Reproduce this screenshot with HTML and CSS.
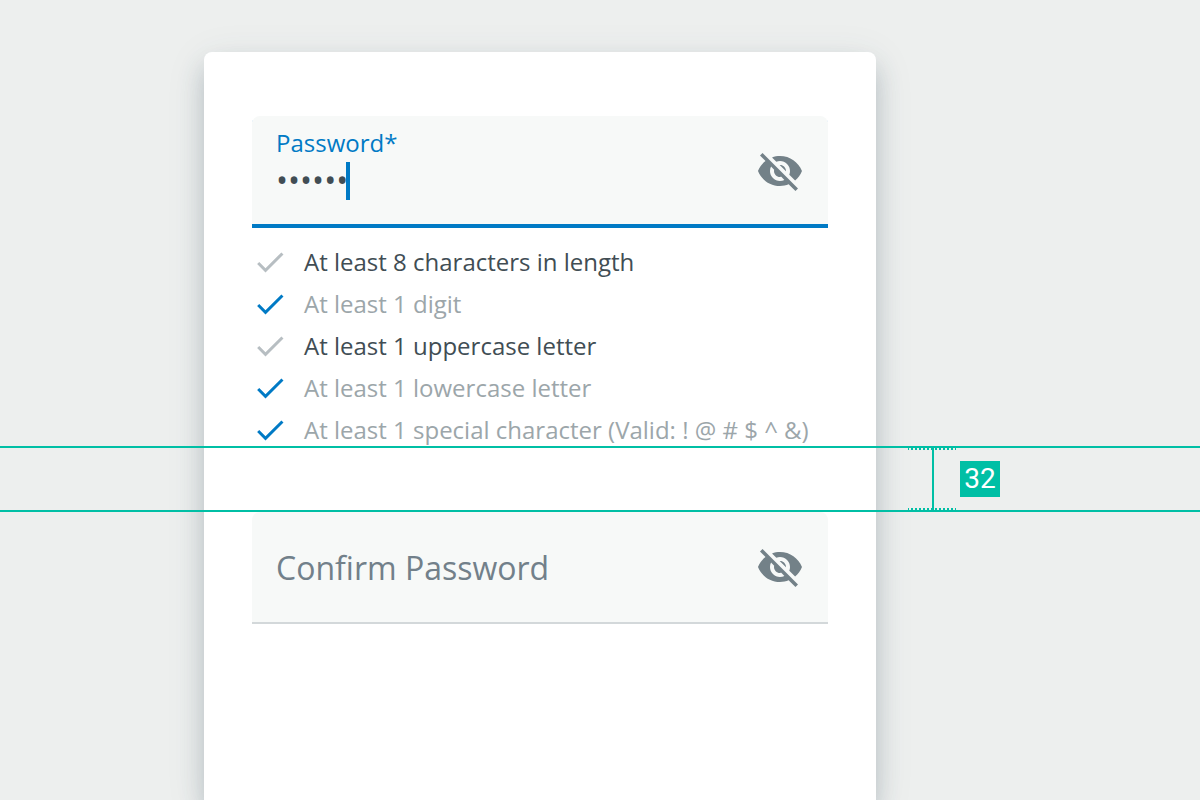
FILE: index.html
```html
<!DOCTYPE html>
<html lang="en">
<head>
<meta charset="utf-8">
<meta name="viewport" content="width=device-width, initial-scale=1">
<title>Password requirements</title>
<link rel="stylesheet" href="styles.css">
</head>
<body>
<svg class="symbols" aria-hidden="true">
  <symbol id="eye-off" viewBox="0 0 24 24"><path d="M12 7c2.76 0 5 2.24 5 5 0 .65-.13 1.26-.36 1.83l2.92 2.92c1.51-1.26 2.7-2.89 3.43-4.75-1.73-4.39-6-7.5-11-7.5-1.4 0-2.74.25-3.98.7l2.16 2.16C10.74 7.13 11.35 7 12 7zM2 4.27l2.28 2.28.46.46C3.08 8.3 1.78 10.02 1 12c1.73 4.39 6 7.5 11 7.5 1.55 0 3.03-.3 4.38-.84l.42.42L19.73 22 21 20.73 3.27 3 2 4.27zM7.53 9.8l1.55 1.55c-.05.21-.08.43-.08.65 0 1.66 1.34 3 3 3 .22 0 .44-.03.65-.08l1.55 1.55c-.67.33-1.41.53-2.2.53-2.76 0-5-2.24-5-5 0-.79.2-1.53.53-2.2zm4.31-.78l3.15 3.15.02-.16c0-1.66-1.34-3-3-3l-.17.01z"/></symbol>
  <symbol id="check" viewBox="0 0 24 24"><path d="M9 16.17L4.83 12l-1.42 1.41L9 19 21 7l-1.41-1.41z"/></symbol>
</svg>
<main class="page">
  <form class="card">
    <div class="field field-active">
      <div class="field-body">
        <label class="field-label" for="password">Password*</label>
        <div class="field-entry">
          <input class="field-input" id="password" type="password" value="secret" autocomplete="off">
          <span class="caret"></span>
        </div>
      </div>
      <button class="toggle" type="button" aria-label="Show password"><svg class="eye"><use href="#eye-off"/></svg></button>
    </div>
    <ul class="rules">
      <li class="rule"><svg class="tick"><use href="#check"/></svg>At least 8 characters in length</li>
      <li class="rule rule-met"><svg class="tick"><use href="#check"/></svg>At least 1 digit</li>
      <li class="rule"><svg class="tick"><use href="#check"/></svg>At least 1 uppercase letter</li>
      <li class="rule rule-met"><svg class="tick"><use href="#check"/></svg>At least 1 lowercase letter</li>
      <li class="rule rule-met"><svg class="tick"><use href="#check"/></svg>At least 1 special character (Valid: ! @ # $ ^ &amp;)</li>
    </ul>
    <div class="field">
      <div class="field-body">
        <input class="field-input" type="password" placeholder="Confirm Password" aria-label="Confirm Password" autocomplete="off">
      </div>
      <button class="toggle" type="button" aria-label="Show confirmed password"><svg class="eye"><use href="#eye-off"/></svg></button>
    </div>
  </form>
</main>
<div class="measure">
  <div class="bracket"></div>
  <span class="measure-value">32</span>
</div>
</body>
</html>
```

FILE: styles.css
```css
* {
  box-sizing: border-box;
}

body {
  position: relative;
  margin: 0;
  background: #edefee;
  color: #414d54;
  font-family: "Open Sans", "Noto Sans", sans-serif;
}

.symbols {
  display: none;
}

.page {
  display: grid;
  grid-template-columns: 17fr 56fr 27fr;
  min-height: 100vh;
  padding-top: 52px;
}

.card {
  grid-column: 2;
  padding: 64px 48px;
  border-radius: 8px 8px 0 0;
  background: #fff;
  box-shadow: 0 16px 24px rgba(55, 80, 96, 0.24), 0 8px 40px rgba(55, 80, 96, 0.1);
}

.field {
  display: flex;
  align-items: center;
  justify-content: space-between;
  min-height: 112px;
  padding: 0 24px;
  border-bottom: 2px solid #d3d8da;
  border-radius: 8px 8px 0 0;
  background: #f7f9f8;
}

.field-active {
  border-bottom-color: #007ac5;
  box-shadow: inset 0 -2px #007ac5;
}

.field-body {
  flex: 1;
}

.field-active .field-body {
  padding-bottom: 14px;
}

.field-label {
  display: block;
  margin-bottom: 4px;
  color: #007ac5;
  font-size: 24px;
  line-height: 30px;
}

.field-entry {
  position: relative;
  height: 38px;
}

.field-input {
  display: block;
  width: 100%;
  height: 38px;
  padding: 0;
  border: 0;
  outline: 0;
  background: transparent;
  color: #414d54;
  font-family: inherit;
  font-size: 32px;
}

.field-entry .field-input {
  height: 34px;
}

.field-input::placeholder {
  color: #72808a;
  opacity: 1;
}

.caret {
  position: absolute;
  top: 0;
  left: 70px;
  width: 4px;
  height: 38px;
  background: #007ac5;
}

.toggle {
  padding: 0;
  border: 0;
  background: transparent;
  color: #738188;
}

.eye {
  display: block;
  width: 48px;
  height: 48px;
  fill: currentColor;
}

.rules {
  display: grid;
  gap: 6px;
  margin: 0;
  padding: 16px 0 64px;
  list-style: none;
}

.rule {
  display: flex;
  align-items: center;
  gap: 16px;
  font-size: 24px;
  line-height: 36px;
}

.rule-met {
  color: #9ca6aa;
}

.tick {
  flex: none;
  width: 36px;
  height: 36px;
  fill: #b7bec2;
}

.rule-met .tick {
  fill: #007ac5;
}

.measure {
  position: absolute;
  top: 446px;
  right: 0;
  left: 0;
  display: flex;
  align-items: center;
  gap: 4px;
  height: 66px;
  padding-left: calc(73% + 32px);
  border-top: 2px solid #00bfa5;
  border-bottom: 2px solid #00bfa5;
  pointer-events: none;
}

.bracket {
  width: 48px;
  height: 100%;
  background:
    linear-gradient(#00bfa5, #00bfa5) 24px 0 / 2px 100% no-repeat,
    repeating-linear-gradient(90deg, #00bfa5 0 1px, transparent 1px 3px, #00bfa5 3px 4px) top / 100% 2px no-repeat,
    repeating-linear-gradient(90deg, #00bfa5 0 1px, transparent 1px 3px, #00bfa5 3px 4px) bottom / 100% 2px no-repeat;
}

.measure-value {
  min-width: 40px;
  background: #00bfa5;
  color: #fff;
  font-family: Roboto, sans-serif;
  font-size: 28px;
  line-height: 36px;
  text-align: center;
}
```
